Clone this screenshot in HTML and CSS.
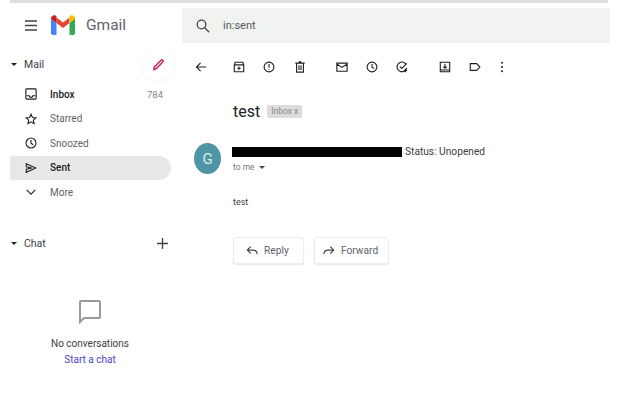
FILE: index.html
```html
<!DOCTYPE html>
<html lang="en">
<head>
<meta charset="utf-8">
<title>Gmail</title>
<link rel="stylesheet" href="styles.css">
</head>
<body>
<div class="topline"></div>
<div class="app">
  <aside class="side">
    <header class="brand">
      <svg class="burger" viewBox="0 0 14 11"><path d="M1 1h12M1 5.500h12M1 10h12"/></svg>
      <svg class="logo" viewBox="0 0 24 20">
        <path fill="#4285f4" d="M0 3v15a2 2 0 0 0 2 2h3.500V8z"/>
        <path fill="#34a853" d="M24 3v15a2 2 0 0 1-2 2h-3.500V8z"/>
        <path fill="#ea4335" d="M5.500 8V2.500L12 7.500l6.500-5V8L12 13z"/>
        <path fill="#c5221f" d="M0 3.500C0 .8 3.200-.9 5.500 1v7L0 3.800z"/>
        <path fill="#fbbc04" d="M24 3.500C24 .8 20.800-.9 18.500 1v7L24 3.800z"/>
      </svg>
      <span class="wordmark">Gmail</span>
    </header>
    <div class="section mail-head">
      <span class="caret"></span><span>Mail</span>
      <span class="compose">
        <svg viewBox="0 0 14 14"><path d="M2 12.500l.6-3L9.800 2.300a1.100 1.100 0 0 1 1.500 0l.4.400a1.100 1.100 0 0 1 0 1.500L4.500 11.500z"/></svg>
      </span>
    </div>
    <nav class="nav">
      <a class="item strong">
        <svg viewBox="0 0 14 14"><path d="M2 1h10a1 1 0 0 1 1 1v10a1 1 0 0 1-1 1H2a1 1 0 0 1-1-1V2a1 1 0 0 1 1-1zM2 9h3a2 2 0 0 0 4 0h3"/></svg>
        <span class="label">Inbox</span><span class="count">784</span>
      </a>
      <a class="item">
        <svg viewBox="0 0 14 14"><path d="M7 1.500l1.700 3.800 4.100.4-3.100 2.700.9 4L7 10.300l-3.600 2.100.9-4L1.200 5.700l4.100-.4z"/></svg>
        <span class="label">Starred</span>
      </a>
      <a class="item">
        <svg viewBox="0 0 14 14"><circle cx="7" cy="7" r="5.800"/><path d="M7 3.500V7.300l2.600 1.700"/></svg>
        <span class="label">Snoozed</span>
      </a>
      <a class="item strong active">
        <svg viewBox="0 0 14 14"><path d="M1.500 2l11 5-11 5V8.500L8 7 1.500 5.500z"/></svg>
        <span class="label">Sent</span>
      </a>
      <a class="item">
        <svg viewBox="0 0 14 14"><path d="M2 4.500l5 5 5-5"/></svg>
        <span class="label">More</span>
      </a>
    </nav>
    <div class="section chat-head">
      <span class="caret"></span><span>Chat</span>
      <svg class="plus" viewBox="0 0 11 11"><path d="M5.500 0v11M0 5.500h11"/></svg>
    </div>
    <div class="empty">
      <svg class="bubble" viewBox="0 0 24 26"><path d="M3 2h18a1 1 0 0 1 1 1v15a1 1 0 0 1-1 1H6l-4 4V3a1 1 0 0 1 1-1z"/></svg>
      <p class="empty-title">No conversations</p>
      <a class="empty-link">Start a chat</a>
    </div>
  </aside>
  <main class="main">
    <div class="search">
      <svg viewBox="0 0 14 14"><circle cx="5.500" cy="5.500" r="4.300"/><path d="M8.700 8.700l4.500 4.500"/></svg>
      <span>in:sent</span>
    </div>
    <div class="toolbar">
      <svg class="tool back" viewBox="0 0 14 14"><path d="M13 7H2M6.500 2.200L1.700 7l4.800 4.800"/></svg>
      <svg class="tool archive" viewBox="0 0 14 14"><path d="M2.500 1.500h9l1 3v8h-11v-8zM1.500 4.500h11M7 6.500v4M5 8.500h4"/></svg>
      <svg class="tool" viewBox="0 0 14 14"><circle cx="7" cy="7" r="5.700"/><path d="M7 3.500v4.500M7 9.500v1"/></svg>
      <svg class="tool" viewBox="0 0 14 14"><path d="M1.500 2.500h11M3 2.500v10.500h8V2.500M5.500 1h3M5.800 5v5.500M8.200 5v5.500"/></svg>
      <svg class="tool gap" viewBox="0 0 14 14"><path d="M1 2.500h12v9.500H1zM1 3.500l6 4 6-4"/></svg>
      <svg class="tool" viewBox="0 0 14 14"><circle cx="7" cy="7" r="5.700"/><path d="M7 3.500v3.800l2.600 1.600"/></svg>
      <svg class="tool" viewBox="0 0 14 14"><path d="M11.500 3.500A5.700 5.700 0 1 0 12.500 8M4.500 6.500l2.200 2.200 6-6M11 9v4M9 11h4"/></svg>
      <svg class="tool gap" viewBox="0 0 14 14"><path d="M1.500 1.500h11v11h-11zM7 3.500v4.500M5 6.500l2 2 2-2M1.500 10.500h11" /></svg>
      <svg class="tool" viewBox="0 0 14 14"><path d="M1.500 3h7.500l3.700 4-3.700 4H1.500z"/></svg>
      <svg class="tool dots" viewBox="0 0 4 14"><circle cx="2" cy="2" r="1.200"/><circle cx="2" cy="7" r="1.200"/><circle cx="2" cy="12" r="1.200"/></svg>
    </div>
    <div class="subject">
      <h1>test</h1><span class="chip">Inbox x</span>
    </div>
    <article class="message">
      <div class="avatar">G</div>
      <div class="body">
        <div class="sender"><span class="redact"></span><span class="status">Status: Unopened</span></div>
        <div class="tome">to me <span class="caret small"></span></div>
        <p class="text">test</p>
        <div class="actions">
          <button class="btn reply"><svg viewBox="0 0 14 12"><path d="M13 10.500C13 7.500 11 5.500 8 5.500H1.500M5.500 1.500l-4 4 4 4"/></svg>Reply</button>
          <button class="btn forward"><svg viewBox="0 0 14 12"><path d="M1 10.500C1 7.500 3 5.500 6 5.500h6.500M8.500 1.500l4 4-4 4"/></svg>Forward</button>
        </div>
      </div>
    </article>
  </main>
</div>
</body>
</html>
```
FILE: styles.css
```css
* { box-sizing: border-box; }
html, body { margin: 0; height: 100%; overflow: hidden; }
body { background: #fff; font-family: Roboto, "Liberation Sans", sans-serif; color: #3c4043; }
svg { display: block; fill: none; stroke: #202124; stroke-width: 1.300; }
p, h1 { margin: 0; font-weight: 400; }

.topline { height: 3px; margin: 0 32px 0 10px; background: #dcdedb; }
.app { display: grid; grid-template-columns: 182px 428px; }

.side { display: flex; flex-direction: column; }
.brand { display: flex; align-items: center; height: 44px; padding-left: 24px; }
.burger { width: 14px; height: 11px; margin-right: 13px; stroke: #444; }
.logo { width: 24px; height: 20px; margin-right: 11px; stroke: none; }
.wordmark { font-size: 15.500px; color: #5f6368; }

.section { display: flex; align-items: center; position: relative; padding-left: 11px; font-size: 10.500px; color: #3c4043; }
.caret { width: 0; height: 0; border: 3px solid transparent; border-top: 3px solid #202124; border-bottom: 0; margin-right: 7px; }
.caret.small { display: inline-block; margin: 0 0 1px 2px; border-top-color: #444; }
.mail-head { height: 24px; margin-top: 5px; }
.compose { position: absolute; left: 142px; top: -4px; width: 32px; height: 32px; border-radius: 50%; background: #fff; box-shadow: 0 1px 5px rgba(60, 64, 67, .06); display: flex; align-items: center; justify-content: center; }
.compose svg { width: 13px; height: 13px; stroke: #c5174d; stroke-width: 1.500; }

.nav { margin-top: 6px; display: flex; flex-direction: column; margin-left: 10px; width: 161px; }
.item { display: flex; align-items: center; height: 24.500px; padding-left: 15px; font-size: 10px; color: #5f6368; border-radius: 0 12px 12px 0; }
.item svg { width: 12px; height: 12px; margin-right: 13px; flex: none; }
.strong { color: #202124; font-weight: 500; }
.active { background: #e8e8e8; }
.count { margin-left: auto; margin-right: 8px; font-weight: 400; font-size: 9.500px; color: #80868b; }

.chat-head { height: 20px; margin-top: 29px; }
.plus { position: absolute; left: 157px; top: 4px; width: 11px; height: 11px; stroke: #3c4043; }

.empty { display: flex; flex-direction: column; align-items: center; margin-top: 45px; width: 180px; }
.bubble { width: 24px; height: 26px; stroke: #9a9a9a; stroke-width: 2; }
.empty-title { margin-top: 12px; font-size: 10px; line-height: 14px; color: #3c4043; }
.empty-link { margin-top: 2px; font-size: 10px; line-height: 14px; color: #4a45c8; }

.search { display: flex; align-items: center; height: 35px; margin-top: 5px; padding-left: 14px; background: #f1f3f1; font-size: 11px; color: #55585b; }
.search svg { width: 14px; height: 14px; margin-right: 13px; stroke: #444; }

.toolbar { display: flex; align-items: center; height: 20px; margin-top: 14px; padding-left: 13px; }
.tool { width: 12px; height: 12px; margin-right: 18.300px; flex: none; }
.back { margin-right: 26px; }
.gap { margin-left: 12px; }
.dots { width: 4px; margin-right: 0; margin-left: 1px; fill: #202124; stroke: none; }

.subject { display: flex; align-items: center; margin: 24px 0 0 51px; height: 20px; }
.subject h1 { font-size: 16px; color: #202124; line-height: 20px; margin-top: 2px; }
.chip { margin-left: 7px; padding: 0 4px; height: 13px; line-height: 13px; font-size: 8.500px; color: #8a8a8a; background: #dcdcdc; border-radius: 2px; }

.message { display: flex; margin: 22px 0 0 12px; }
.avatar { width: 27px; height: 31px; border-radius: 50%; background: #4f95a3; color: #d9eef0; font-size: 15px; display: flex; align-items: center; justify-content: center; flex: none; }
.body { margin-left: 11px; flex: 1; }
.sender { display: flex; align-items: center; height: 16px; }
.redact { width: 170px; height: 10px; background: #000; margin: 2px 3px 0 0; }
.status { font-size: 10.200px; color: #3c4043; }
.tome { margin-top: 3px; padding-left: 1px; font-size: 8.500px; line-height: 10px; color: #777; }
.text { margin-top: 24px; padding-left: 1px; font-size: 9px; line-height: 12px; color: #3c4043; }
.actions { display: flex; gap: 10px; margin: 29px 0 0 1px; }
.btn { display: flex; align-items: center; height: 27px; padding: 0 0 0 12px; background: #fff; border: 1px solid #eceded; border-radius: 3px; box-shadow: 0 1px 1px rgba(60, 64, 67, .12); font: 10.200px Roboto, sans-serif; color: #5f6368; }
.btn svg { width: 12px; height: 11px; margin-right: 6px; stroke: #444; }
.reply { width: 71px; }
.forward { width: 75px; padding-left: 8px; }
```
